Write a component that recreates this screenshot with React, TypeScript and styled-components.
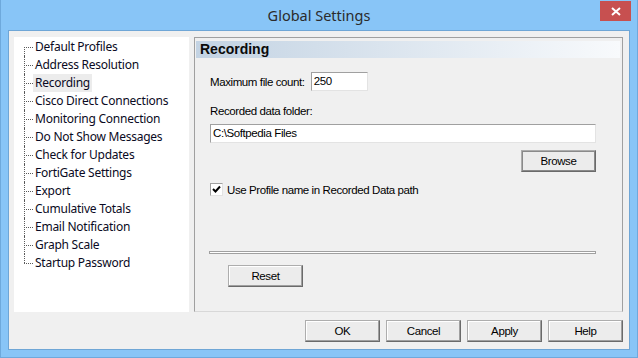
import styled, { createGlobalStyle } from "styled-components"

const GlobalStyle = createGlobalStyle`
  html, body {
    margin: 0;
    padding: 0;
    background: #87c4f6;
  }
  body {
    font-family: "Liberation Sans", Arial, sans-serif;
  }
`

const treeItems = [
  "Default Profiles",
  "Address Resolution",
  "Recording",
  "Cisco Direct Connections",
  "Monitoring Connection",
  "Do Not Show Messages",
  "Check for Updates",
  "FortiGate Settings",
  "Export",
  "Cumulative Totals",
  "Email Notification",
  "Graph Scale",
  "Startup Password",
]

const Window = styled.div`
  width: 638px;
  height: 358px;
  display: flex;
  flex-direction: column;
  background: #88c5f7;
  box-sizing: border-box;
  border: 1px solid #6ea9dc;
  border-top: none;
`

const TitleBar = styled.div`
  position: relative;
  height: 30px;
  display: flex;
  align-items: center;
  justify-content: center;
  font-family: "Noto Sans", "Open Sans", sans-serif;
  font-size: 14.5px;
  color: #2b2b2b;
`

const CloseButton = styled.div`
  position: absolute;
  top: 1px;
  right: 6px;
  width: 31px;
  height: 20px;
  background: #c75050;
  display: flex;
  align-items: center;
  justify-content: center;
`

const Client = styled.div`
  flex: 1;
  margin: 0 7px 7px 7px;
  background: #f0f0f0;
  border: 1px solid #6fa6d6;
  display: flex;
  flex-direction: column;
  padding: 6px 6px 0 5px;
`

const Body = styled.div`
  display: flex;
  gap: 5px;
  height: 275px;
`

const Tree = styled.ul`
  width: 175px;
  margin: 0;
  padding: 1px 0 0 10px;
  list-style: none;
  background: #ffffff;
  box-sizing: border-box;
  font-family: "Noto Sans", "Open Sans", sans-serif;
  font-size: 12px;
  letter-spacing: -0.25px;
  color: #0a0a23;
`

const TreeItem = styled.li<{ $first?: boolean; $last?: boolean }>`
  position: relative;
  height: 18px;
  line-height: 18px;
  padding-left: 9px;
  &:before {
    content: "";
    position: absolute;
    left: 0;
    top: 9px;
    width: 9px;
    border-top: 1px dotted #5a5a5a;
  }
  &:after {
    content: "";
    position: absolute;
    left: 0;
    top: ${p => (p.$first ? "9px" : "0")};
    height: ${p => (p.$last || p.$first ? "9px" : "18px")};
    border-left: 1px dotted #5a5a5a;
  }
`

const TreeLabel = styled.span<{ $selected?: boolean }>`
  display: inline-block;
  padding: 0 2px;
  background: ${p => (p.$selected ? "#ececec" : "transparent")};
`

const Panel = styled.div`
  flex: 1;
  border: 1px solid #a0a0a0;
  border-bottom-color: #d8d8d8;
  padding: 3px 2px 0 1px;
  display: flex;
  flex-direction: column;
  color: #000;
`

const PanelHeader = styled.div`
  height: 17px;
  line-height: 17px;
  padding-left: 4px;
  background: linear-gradient(to right, #c3d3e3, #f8fafc);
  font-weight: bold;
  font-size: 14px;
  color: #0a0a0a;
`

const PanelContent = styled.div`
  padding: 14px 24px 0 14px;
  display: flex;
  flex-direction: column;
`

const Row = styled.div<{ $gap?: number; $top?: number; $end?: boolean }>`
  display: flex;
  align-items: center;
  gap: ${p => p.$gap ?? 6}px;
  margin-top: ${p => p.$top ?? 0}px;
  justify-content: ${p => (p.$end ? "flex-end" : "flex-start")};
`

const Label = styled.span`
  font-size: 11.5px;
  letter-spacing: -0.4px;
`

const TextInput = styled.div<{ $width?: number }>`
  height: 19px;
  line-height: 17px;
  box-sizing: border-box;
  width: ${p => (p.$width ? `${p.$width}px` : "100%")};
  background: #fff;
  border: 1px solid #e3e3e3;
  border-top-color: #a0a0a0;
  border-left-color: #a0a0a0;
  padding-left: 2px;
  font-size: 11.5px;
  letter-spacing: -0.4px;
`

const Button = styled.div<{ $default?: boolean }>`
  width: 75px;
  height: 22px;
  box-sizing: border-box;
  display: flex;
  align-items: center;
  justify-content: center;
  background: #ececec;
  border: 1px solid #adadad;
  border-right-color: #6a6a6a;
  border-bottom-color: #6a6a6a;
  box-shadow: ${p => (p.$default ? "inset 0 0 0 1px #8a8a8a" : "inset -1px -1px 0 #a0a0a0, inset 1px 1px 0 #fff")};
  font-size: 11.5px;
  letter-spacing: -0.4px;
  color: #000;
`

const CheckBox = styled.div`
  width: 13px;
  height: 13px;
  box-sizing: border-box;
  background: #fff;
  border: 1px solid #a0a0a0;
  border-right-color: #e3e3e3;
  border-bottom-color: #e3e3e3;
  display: flex;
  align-items: center;
  justify-content: center;
`

const Separator = styled.div`
  height: 1px;
  margin: 55px 0 0 -1px;
  border: 1px solid #a0a0a0;
  background: #ffffff;
`

const ResetRow = styled.div`
  margin-top: 11px;
  padding-left: 18px;
`

const Footer = styled.div`
  display: flex;
  justify-content: flex-end;
  gap: 6px;
  padding: 8px 0 0 0;
`

export default function App() {
  return (
    <>
      <GlobalStyle />
      <Window>
        <TitleBar>
          Global Settings
          <CloseButton>
            <svg width="10" height="9" viewBox="0 0 10 9">
              <path d="M1 1 L9 8 M9 1 L1 8" stroke="#fff" strokeWidth="2" />
            </svg>
          </CloseButton>
        </TitleBar>
        <Client>
          <Body>
            <Tree>
              {treeItems.map((item, index) => (
                <TreeItem key={item} $last={index === treeItems.length - 1} $first={index === 0}>
                  <TreeLabel $selected={item === "Recording"}>{item}</TreeLabel>
                </TreeItem>
              ))}
            </Tree>
            <Panel>
              <PanelHeader>Recording</PanelHeader>
              <PanelContent>
                <Row $gap={6}>
                  <Label>Maximum file count:</Label>
                  <TextInput $width={57}>250</TextInput>
                </Row>
                <Row $top={14}>
                  <Label>Recorded data folder:</Label>
                </Row>
                <Row $top={7}>
                  <TextInput>C:\Softpedia Files</TextInput>
                </Row>
                <Row $top={7} $end>
                  <Button $default>Browse</Button>
                </Row>
                <Row $top={11} $gap={4}>
                  <CheckBox>
                    <svg width="9" height="9" viewBox="0 0 9 9">
                      <path d="M1 4 L3.5 6.5 L8 1.5" stroke="#000" strokeWidth="2" fill="none" />
                    </svg>
                  </CheckBox>
                  <Label>Use Profile name in Recorded Data path</Label>
                </Row>
                <Separator />
                <ResetRow>
                  <Button>Reset</Button>
                </ResetRow>
              </PanelContent>
            </Panel>
          </Body>
          <Footer>
            <Button>OK</Button>
            <Button>Cancel</Button>
            <Button>Apply</Button>
            <Button>Help</Button>
          </Footer>
        </Client>
      </Window>
    </>
  )
}
